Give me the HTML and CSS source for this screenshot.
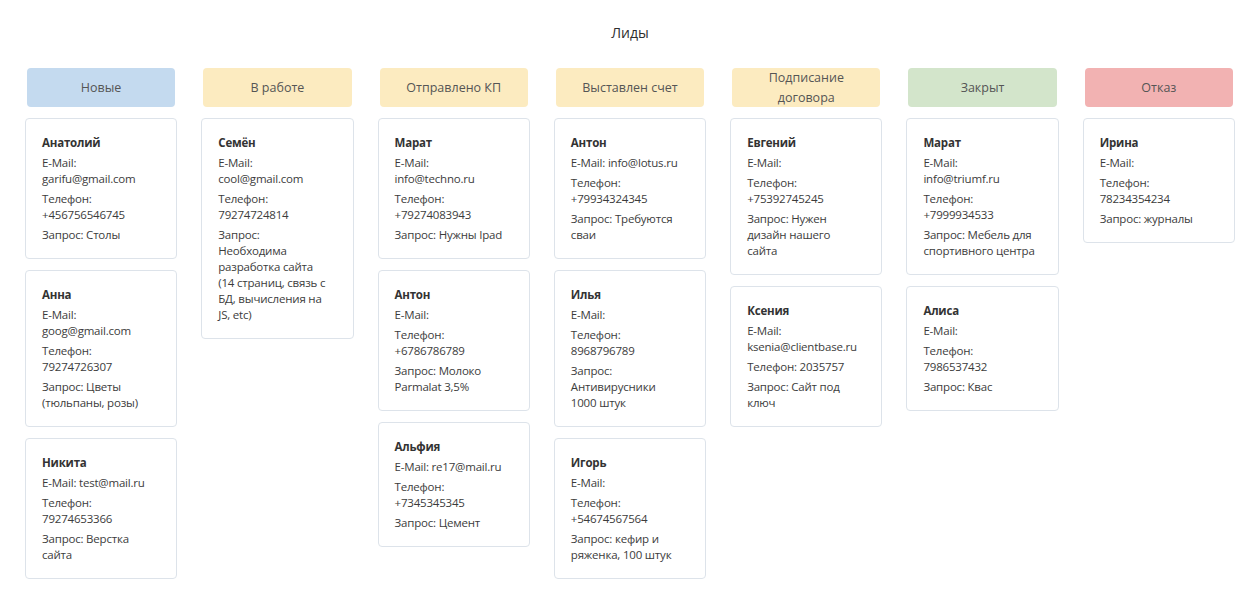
FILE: index.html
```html
<!DOCTYPE html>
<html lang="ru">
<head>
<meta charset="utf-8">
<title>Лиды</title>
<link rel="stylesheet" href="styles.css">
</head>
<body>
<div class="page">
  <h1 class="title">Лиды</h1>
  <div class="board">
    <div class="column">
      <div class="col-head blue">Новые</div>
      <div class="card"><div class="name">Анатолий</div><div class="field">E-Mail:<br>garifu@gmail.com</div><div class="field">Телефон:<br>+456756546745</div><div class="field">Запрос: Столы</div></div>
      <div class="card"><div class="name">Анна</div><div class="field">E-Mail:<br>goog@gmail.com</div><div class="field">Телефон:<br>79274726307</div><div class="field">Запрос: Цветы<br>(тюльпаны, розы)</div></div>
      <div class="card"><div class="name">Никита</div><div class="field">E-Mail: test@mail.ru</div><div class="field">Телефон:<br>79274653366</div><div class="field">Запрос: Верстка<br>сайта</div></div>
    </div>
    <div class="column">
      <div class="col-head yellow">В работе</div>
      <div class="card"><div class="name">Семён</div><div class="field">E-Mail:<br>cool@gmail.com</div><div class="field">Телефон:<br>79274724814</div><div class="field">Запрос:<br>Необходима<br>разработка сайта<br>(14 страниц, связь с<br>БД, вычисления на<br>JS, etc)</div></div>
    </div>
    <div class="column">
      <div class="col-head yellow">Отправлено КП</div>
      <div class="card"><div class="name">Марат</div><div class="field">E-Mail:<br>info@techno.ru</div><div class="field">Телефон:<br>+79274083943</div><div class="field">Запрос: Нужны Ipad</div></div>
      <div class="card"><div class="name">Антон</div><div class="field">E-Mail:</div><div class="field">Телефон:<br>+6786786789</div><div class="field">Запрос: Молоко<br>Parmalat 3,5%</div></div>
      <div class="card"><div class="name">Альфия</div><div class="field">E-Mail: re17@mail.ru</div><div class="field">Телефон:<br>+7345345345</div><div class="field">Запрос: Цемент</div></div>
    </div>
    <div class="column">
      <div class="col-head yellow">Выставлен счет</div>
      <div class="card"><div class="name">Антон</div><div class="field">E-Mail: info@lotus.ru</div><div class="field">Телефон:<br>+79934324345</div><div class="field">Запрос: Требуются<br>сваи</div></div>
      <div class="card"><div class="name">Илья</div><div class="field">E-Mail:</div><div class="field">Телефон:<br>8968796789</div><div class="field">Запрос:<br>Антивирусники<br>1000 штук</div></div>
      <div class="card"><div class="name">Игорь</div><div class="field">E-Mail:</div><div class="field">Телефон:<br>+54674567564</div><div class="field">Запрос: кефир и<br>ряженка, 100 штук</div></div>
    </div>
    <div class="column">
      <div class="col-head yellow">Подписание договора</div>
      <div class="card"><div class="name">Евгений</div><div class="field">E-Mail:</div><div class="field">Телефон:<br>+75392745245</div><div class="field">Запрос: Нужен<br>дизайн нашего<br>сайта</div></div>
      <div class="card"><div class="name">Ксения</div><div class="field">E-Mail:<br>ksenia@clientbase.ru</div><div class="field">Телефон: 2035757</div><div class="field">Запрос: Сайт под<br>ключ</div></div>
    </div>
    <div class="column">
      <div class="col-head green">Закрыт</div>
      <div class="card"><div class="name">Марат</div><div class="field">E-Mail:<br>info@triumf.ru</div><div class="field">Телефон:<br>+7999934533</div><div class="field">Запрос: Мебель для<br>спортивного центра</div></div>
      <div class="card"><div class="name">Алиса</div><div class="field">E-Mail:</div><div class="field">Телефон:<br>7986537432</div><div class="field">Запрос: Квас</div></div>
    </div>
    <div class="column">
      <div class="col-head red">Отказ</div>
      <div class="card"><div class="name">Ирина</div><div class="field">E-Mail:</div><div class="field">Телефон:<br>78234354234</div><div class="field">Запрос: журналы</div></div>
    </div>
  </div>
</div>
</body>
</html>
```

FILE: styles.css
```css
html, body {
  margin: 0;
  padding: 0;
  background: #ffffff;
}

body {
  font-family: "Open Sans", "Noto Sans", sans-serif;
  color: #3c3c3c;
}

.page {
  padding: 23px 25px 0;
}

.title {
  margin: 0 0 25px;
  font-size: 14px;
  line-height: 20px;
  font-weight: 400;
  text-align: center;
  color: #2e2e2e;
}

.board {
  display: grid;
  grid-template-columns: repeat(7, minmax(0, 1fr));
  column-gap: 24px;
  align-items: start;
}

.column {
  display: flex;
  flex-direction: column;
  gap: 11px;
}

.col-head {
  margin: 0 2px;
  height: 39px;
  padding: 0 14px;
  border-radius: 4px;
  display: flex;
  align-items: center;
  justify-content: center;
  text-align: center;
  font-size: 12.5px;
  line-height: 20px;
  color: #555555;
}

.blue { background: #c4daef; }
.yellow { background: #fcebc0; }
.green { background: #d3e5cb; }
.red { background: #f2b2b2; }

.card {
  border: 1px solid #dde3ea;
  border-radius: 4px;
  padding: 16px 8px 15px 16px;
  font-size: 11.5px;
  letter-spacing: -0.2px;
  line-height: 16px;
  display: flex;
  flex-direction: column;
  gap: 4px;
}

.field {
  white-space: nowrap;
}

.name {
  font-weight: 700;
  color: #333333;
}
```
